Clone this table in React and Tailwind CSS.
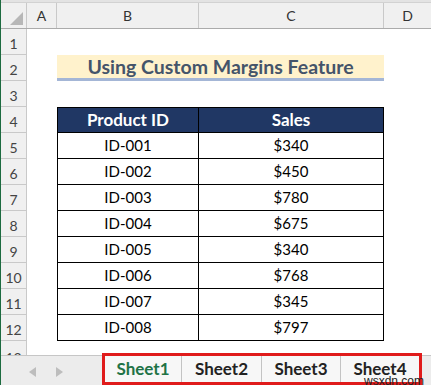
import React from 'react';

const data = [
  ['ID-001', '$340'],
  ['ID-002', '$450'],
  ['ID-003', '$780'],
  ['ID-004', '$675'],
  ['ID-005', '$340'],
  ['ID-006', '$768'],
  ['ID-007', '$345'],
  ['ID-008', '$797'],
];

const font = { fontFamily: 'Lato, "Open Sans", Arial, sans-serif' };

function RowHead({ n }) {
  return (
    <div className="w-[26px] shrink-0 bg-[#f0f0f0] border-r border-b border-[#c9c9c9] flex items-center justify-center text-[14px] text-[#444] pt-[4px]">
      {n}
    </div>
  );
}

function Row({ n, children }) {
  return (
    <div className="flex h-[26px]">
      <RowHead n={n} />
      <div className="w-[30px] shrink-0" />
      {children}
    </div>
  );
}

export default function App() {
  return (
    <div className="w-[431px] h-[385px] overflow-hidden bg-white border-l border-[#1d6b40] flex flex-col" style={font}>
      <div className="h-[3px] shrink-0 bg-[#e3e3e3] border-b border-[#d2d2d2]" />

      {/* column headers */}
      <div className="flex h-[26px] shrink-0 bg-[#f0f0f0] border-b border-[#ababab] text-[14px] text-[#333]">
        <div className="w-[26px] shrink-0 border-r border-[#c9c9c9] flex items-end justify-end pr-[3px] pb-[3px]">
          <svg width="13" height="13" viewBox="0 0 13 13">
            <polygon points="13,0 13,13 0,13" fill="#b7b7b7" />
          </svg>
        </div>
        <div className="w-[30px] shrink-0 border-r border-[#c9c9c9] flex items-center justify-center">A</div>
        <div className="w-[142px] shrink-0 border-r border-[#c9c9c9] flex items-center justify-center">B</div>
        <div className="w-[185px] shrink-0 border-r border-[#c9c9c9] flex items-center justify-center">C</div>
        <div className="flex-1 flex items-center justify-center">D</div>
      </div>

      <Row n={1} />
      <Row n={2}>
        <div className="w-[327px] shrink-0 bg-[#fff2cc] border-b-[3px] border-[#a4b6d6] flex items-center justify-center text-[19.5px] font-bold text-[#44546a]">
          Using Custom Margins Feature
        </div>
      </Row>
      <Row n={3} />
      <Row n={4}>
        <div className="w-[142px] shrink-0 bg-[#203764] border border-black flex items-center justify-center text-white font-bold text-[17px]">
          Product ID
        </div>
        <div className="w-[185px] shrink-0 bg-[#203764] border-t border-r border-b border-black flex items-center justify-center text-white font-bold text-[17px]">
          Sales
        </div>
      </Row>
      {data.map(([id, sales], i) => (
        <Row key={id} n={i + 5}>
          <div className="w-[142px] shrink-0 border-l border-r border-b border-black flex items-center justify-center text-[15px] text-black">
            {id}
          </div>
          <div className="w-[185px] shrink-0 border-r border-b border-black flex items-center justify-center text-[15px] text-black">
            {sales}
          </div>
        </Row>
      ))}
      <div className="flex h-[14px] shrink-0 overflow-hidden">
        <div className="w-[26px] shrink-0 bg-[#f0f0f0] border-r border-[#c9c9c9] text-center text-[14px] text-[#444] leading-[26px] pt-[4px]">13</div>
      </div>

      {/* sheet tabs */}
      <div className="flex-1 flex bg-[#ececec] border-t border-[#c6c6c6] relative">
        <div className="w-[101px] shrink-0 flex items-center gap-[20px] pl-[28px] pt-[1px]">
          <svg width="7" height="10" viewBox="0 0 7 10"><polygon points="7,0 7,10 0,5" fill="#bdbdbd" /></svg>
          <svg width="7" height="10" viewBox="0 0 7 10"><polygon points="0,0 0,10 7,5" fill="#bdbdbd" /></svg>
        </div>
        <div className="flex -mt-[3px] mb-[3px] border-[3px] border-[#e01b1b] bg-[#f7f7f7] text-[17px] font-bold">
          <div className="w-[77px] flex items-center justify-center text-[#217346] border-r border-[#c3c3c3]">Sheet1</div>
          <div className="w-[80px] flex items-center justify-center text-[#222] border-r border-[#c3c3c3]">Sheet2</div>
          <div className="w-[79px] flex items-center justify-center text-[#222] border-r border-[#c3c3c3]">Sheet3</div>
          <div className="w-[78px] flex items-center justify-center text-[#222]">Sheet4</div>
        </div>
        <div className="flex-1" />
        <span className="absolute right-[7px] bottom-[1px] text-[12px] text-[#222] leading-none" style={{ fontFamily: 'Arial, sans-serif' }}>wsxdn.com</span>
      </div>
    </div>
  );
}
